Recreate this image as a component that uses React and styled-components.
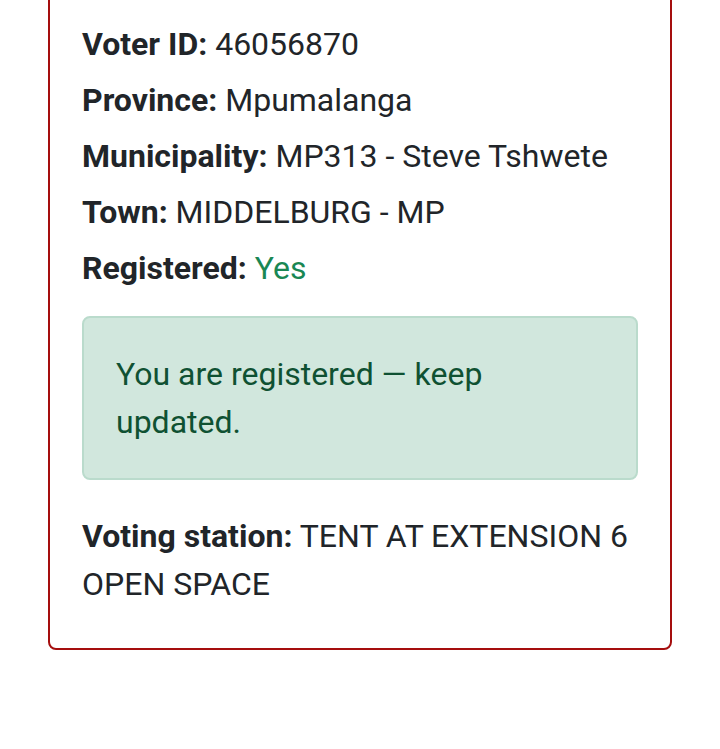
import React from 'react';
import styled, { createGlobalStyle } from 'styled-components';

const GlobalStyle = createGlobalStyle`
  html, body {
    margin: 0;
    padding: 0;
    background: #fff;
  }
  body {
    font-family: Roboto, "Liberation Sans", sans-serif;
    color: #212529;
    overflow: hidden;
  }
`;

const Page = styled.div`
  padding: 0 48px;
  height: 749px;
`;

// the card is scrolled partly out of view at the top
const Card = styled.div`
  margin-top: -60px;
  border: 2px solid #a50e0e;
  border-radius: 8px;
  padding: 78px 32px 32px;
`;

const Line = styled.p`
  margin: 0 0 8px;
  font-size: 32px;
  line-height: 48px;
`;

const Label = styled.strong`
  font-weight: 700;
`;

const Value = styled.span`
  color: ${props => props.tone || 'inherit'};
`;

const Alert = styled.div`
  margin: 24px 0 32px;
  padding: 32px;
  background: #d1e7dd;
  border: 2px solid #badbcc;
  border-radius: 8px;
  color: #0f5132;
  font-size: 32px;
  line-height: 48px;
`;

const details = [
  ['Voter ID:', '46056870'],
  ['Province:', 'Mpumalanga'],
  ['Municipality:', 'MP313 - Steve Tshwete'],
  ['Town:', 'MIDDELBURG - MP'],
];

const App = () => (
  <>
    <GlobalStyle />
    <Page>
      <Card>
        {details.map(([label, value]) => (
          <Line key={label}>
            <Label>{label}</Label> <Value>{value}</Value>
          </Line>
        ))}
        <Line>
          <Label>Registered:</Label> <Value tone="#198754">Yes</Value>
        </Line>
        <Alert>You are registered — keep updated.</Alert>
        <Line>
          <Label>Voting station:</Label> <Value>TENT AT EXTENSION 6 OPEN SPACE</Value>
        </Line>
      </Card>
    </Page>
  </>
);

export default App;
